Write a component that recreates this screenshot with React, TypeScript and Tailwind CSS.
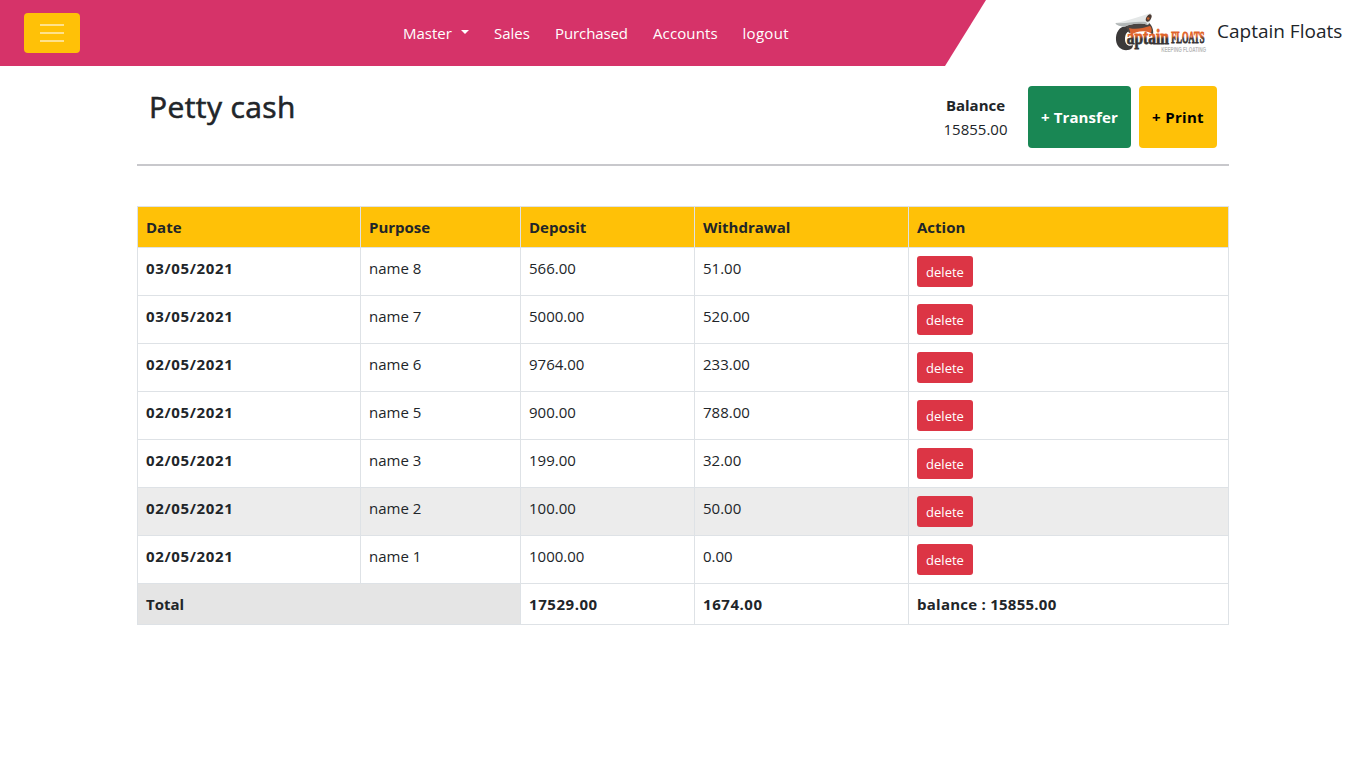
const rows = [
  { date: '03/05/2021', purpose: 'name 8', deposit: '566.00', withdrawal: '51.00' },
  { date: '03/05/2021', purpose: 'name 7', deposit: '5000.00', withdrawal: '520.00' },
  { date: '02/05/2021', purpose: 'name 6', deposit: '9764.00', withdrawal: '233.00' },
  { date: '02/05/2021', purpose: 'name 5', deposit: '900.00', withdrawal: '788.00' },
  { date: '02/05/2021', purpose: 'name 3', deposit: '199.00', withdrawal: '32.00' },
  { date: '02/05/2021', purpose: 'name 2', deposit: '100.00', withdrawal: '50.00', active: true },
  { date: '02/05/2021', purpose: 'name 1', deposit: '1000.00', withdrawal: '0.00' },
];

const links = [
  { label: 'Master', width: 'w-[91px]', caret: true },
  { label: 'Sales', width: 'w-[61px]' },
  { label: 'Purchased', width: 'w-[98px] tracking-[-0.1px]' },
  { label: 'Accounts', width: 'w-[89.5px] tracking-[0.12px]' },
  { label: 'logout', width: 'w-[50px] tracking-[0.3px]' },
];

function Logo() {
  return (
    <svg width="96" height="48" viewBox="0 0 96 48" className="shrink-0">
      <defs>
        <linearGradient id="lettering" gradientUnits="userSpaceOnUse" x1="0" y1="24" x2="0" y2="27">
          <stop offset="0" stopColor="#df6229" />
          <stop offset="1" stopColor="#373333" />
        </linearGradient>
      </defs>
      <path d="M13 14C5 14 1.500 21 2 28C2.500 35 8 39 14 38C17 37.500 19 36 19 33C15 35 11 33 11 27C11 22 13 19 17 19Z" fill="#3b3939" />
      <path d="M11 13C19 9 27 9 34 10C38 13 40 18 39 23C36 20 33 18 29 18L15 21Z" fill="#4a4442" />
      <path d="M15 16C22 18 29 16 36 14C38 16 38 18 37 21C31 18 22 19 17 23Z" fill="#dc6430" />
      <path d="M1.500 11C13 9 24 5 37 1C38.500 4 37 9 34 13C25 10 17 12 11 14.500C6 14.500 2 13 1.500 11Z" fill="#e4e7e7" />
      <path d="M1.500 11C12 12 20 9 32 10L34 13C25 10 17 12 11 14.500C6 14.500 2 13 1.500 11Z" fill="#b2b7b7" />
      <ellipse cx="34.700" cy="6" rx="2.300" ry="4" transform="rotate(30 34.700 6)" fill="#4c3a32" />
      <circle cx="34.200" cy="6.500" r="1.300" fill="#c4622f" />
      <text x="17.600" y="32.500" transform="scale(0.72 1)" fontFamily="Liberation Serif, serif" fontWeight="700" fontSize="21.500" fill="url(#lettering)" stroke="url(#lettering)" strokeWidth="0.800">aptain</text>
      <text x="111" y="31.500" transform="scale(0.515 1)" fontFamily="Liberation Serif, serif" fontWeight="700" fontSize="16.500" fill="url(#lettering)" stroke="url(#lettering)" strokeWidth="0.900">FLOATS</text>
      <text x="67" y="40.500" transform="scale(0.705 1)" fontFamily="Liberation Sans, sans-serif" fontWeight="700" fontSize="6.500" fill="#b9b9b9">KEEPING FLOATING</text>
    </svg>
  );
}

export default function App() {
  return (
    <div className="min-h-screen bg-white font-['Open_Sans',sans-serif] text-[15px] leading-6 text-[#212529]">
      <header className="flex h-[66px] items-start">
        <div className="flex h-[66px] w-[986px] shrink-0 items-start bg-[#d63369] pl-6 pt-[13px] [clip-path:polygon(0_0,100%_0,945px_100%,0_100%)]">
          <button className="flex h-10 w-14 shrink-0 flex-col items-center justify-center gap-1.5 rounded-[4px] bg-[#ffc107]">
            <span className="h-0.5 w-6 bg-[#ffe28c]" />
            <span className="h-0.5 w-6 bg-[#ffe28c]" />
            <span className="h-0.5 w-6 bg-[#ffe28c]" />
          </button>
          <nav className="ml-[323px] flex pt-2 text-white">
            {links.map((link) => (
              <a key={link.label} className={`flex items-center whitespace-nowrap ${link.width}`}>
                {link.label}
                {link.caret && <span className="mb-0.5 ml-[9px] border-x-[4.8px] border-t-[4.8px] border-x-transparent border-t-white" />}
              </a>
            ))}
          </nav>
        </div>
        <div className="ml-[128px] flex pt-3">
          <Logo />
          <span className="ml-[7px] pt-1 text-[19px] leading-[30px] whitespace-nowrap">Captain Floats</span>
        </div>
      </header>

      <main className="mx-auto w-[1092px]">
        <section className="flex h-[100px] items-start border-b-2 border-[#c8c8cc] pt-5 pr-3 pl-3">
          <h1 className="pt-0.5 text-[30px] leading-[38px] font-medium tracking-[0.4px] [-webkit-text-stroke:0.6px_#212529]">Petty cash</h1>
          <div className="ml-auto flex">
            <div className="mr-5 w-[65px] pt-[7px] text-center">
              <div className="font-bold">Balance</div>
              <div>15855.00</div>
            </div>
            <button className="h-[62px] w-[103px] rounded-[4px] bg-[#198754] font-bold tracking-[0.1px] whitespace-nowrap text-white">+ Transfer</button>
            <button className="ml-2 h-[62px] w-[78px] rounded-[4px] bg-[#ffc107] font-bold tracking-[0.3px] whitespace-nowrap text-black">+ Print</button>
          </div>
        </section>

        <table className="mt-10 w-[1092px] table-fixed border-collapse text-left [&_td]:border [&_td]:border-[#dee2e6] [&_td]:px-2 [&_td]:py-0 [&_th]:border [&_th]:border-[#dee2e6] [&_th]:px-2 [&_th]:py-0">
          <colgroup>
            <col className="w-[223px]" />
            <col className="w-[160px]" />
            <col className="w-[174px]" />
            <col className="w-[214px]" />
            <col />
          </colgroup>
          <thead>
            <tr className="h-[41px] bg-[#ffc107]">
              <th>Date</th>
              <th>Purpose</th>
              <th>Deposit</th>
              <th>Withdrawal</th>
              <th>Action</th>
            </tr>
          </thead>
          <tbody>
            {rows.map((row) => (
              <tr key={row.purpose} className={`h-12 align-top [&>*]:pt-2! ${row.active ? 'bg-[#ececec]' : 'bg-white'}`}>
                <th className="tracking-[0.65px]">{row.date}</th>
                <td>{row.purpose}</td>
                <td>{row.deposit}</td>
                <td>{row.withdrawal}</td>
                <td>
                  <button className="block h-[31px] w-14 rounded-[3px] bg-[#dc3545] pt-px text-[13px] leading-[30px] text-white">delete</button>
                </td>
              </tr>
            ))}
            <tr className="h-[41px]">
              <th colSpan={2} className="bg-[#e5e5e5]">Total</th>
              <th className="tracking-[0.55px]">17529.00</th>
              <th className="tracking-[0.55px]">1674.00</th>
              <th className="tracking-[0.25px]">balance : 15855.00</th>
            </tr>
          </tbody>
        </table>
      </main>
    </div>
  );
}
